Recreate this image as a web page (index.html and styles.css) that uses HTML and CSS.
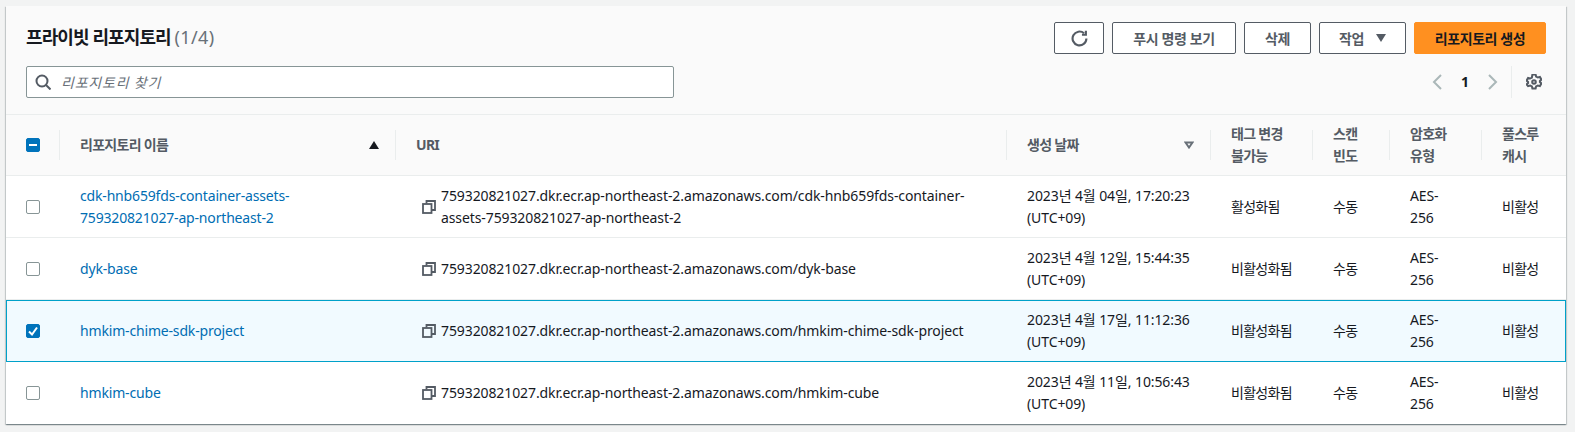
FILE: index.html
```html
<!DOCTYPE html>
<html lang="ko">
<head>
  <meta charset="UTF-8" />
  <title>프라이빗 리포지토리</title>
  <link rel="stylesheet" href="styles.css">
</head>
<body>
  <div class="card">
    <div class="card-header">
      <div class="title-row">
        <h2 class="title">프라이빗 리포지토리 <span class="count">(1/4)</span></h2>
        <div class="actions">
          <button class="btn btn-icon" aria-label="새로 고침">
            <svg width="17" height="17" viewBox="0 0 16 16" fill="none" stroke="#545b64" stroke-width="2"><path d="M14.5 8a6.5 6.5 0 1 1-2.2-4.9"/><path d="M14 0.8v3.7h-3.7" stroke-width="2"/></svg>
          </button>
          <button class="btn btn-push">푸시 명령 보기</button>
          <button class="btn btn-delete">삭제</button>
          <button class="btn btn-menu">작업 <span class="caret"></span></button>
          <button class="btn btn-primary">리포지토리 생성</button>
        </div>
      </div>
      <div class="filter-row">
        <div class="search">
          <svg width="16" height="16" viewBox="0 0 16 16" fill="none" stroke="#545b64" stroke-width="2"><circle cx="7" cy="7" r="5.5"/><path d="M11 11l4.5 4.5"/></svg>
          <input type="text" placeholder="리포지토리 찾기" />
        </div>
        <div class="pager">
          <svg class="pager-arrow" width="10" height="16" viewBox="0 0 10 16" fill="none" stroke="#aab7b8" stroke-width="2"><path d="M9 1L2 8l7 7"/></svg>
          <span class="page-num">1</span>
          <svg class="pager-arrow" width="10" height="16" viewBox="0 0 10 16" fill="none" stroke="#aab7b8" stroke-width="2"><path d="M1 1l7 7-7 7"/></svg>
          <span class="pager-sep"></span>
          <svg class="gear" width="16" height="16" viewBox="0 0 16 16" fill="none" stroke="#545b64" stroke-width="2"><path d="M6.4 1h3.2l.5 2 1.8 1 2-.6 1.5 2.7-1.5 1.4v1l1.5 1.4-1.5 2.7-2-.6-1.8 1-.5 2H6.400l-.5-2-1.800-1-2 .6L.6 10.900l1.500-1.400v-1L.6 7.100l1.500-2.700 2 .6 1.800-1z" transform="translate(0 -0.500)"/><circle cx="8" cy="8" r="1.800"/></svg>
        </div>
      </div>
    </div>

    <table class="repo-table">
      <colgroup>
        <col class="col-check"><col class="col-name"><col class="col-uri"><col class="col-date">
        <col class="col-tag"><col class="col-scan"><col class="col-enc"><col class="col-pull">
      </colgroup>
      <thead>
        <tr>
          <th class="check-cell"><span class="check check-minus"></span></th>
          <th><div class="th-sort">리포지토리 이름 <span class="sort-up"></span></div></th>
          <th>URI</th>
          <th><div class="th-sort">생성 날짜
            <svg width="10" height="8" viewBox="0 0 10 8" fill="none" stroke="#687078" stroke-width="2"><path d="M1.500 1.500h7L5 6.500z"/></svg>
          </div></th>
          <th>태그 변경<br>불가능</th>
          <th>스캔<br>빈도</th>
          <th>암호화<br>유형</th>
          <th>풀스루<br>캐시</th>
        </tr>
      </thead>
      <tbody>
        <tr>
          <td class="check-cell"><span class="check"></span></td>
          <td><a href="#">cdk-hnb659fds-container-assets-759320821027-ap-northeast-2</a></td>
          <td><div class="uri"><svg class="copy" width="14" height="14" viewBox="0 0 14 14" fill="none" stroke="#545b64" stroke-width="1.800"><rect x="1" y="4" width="8.500" height="9"/><path d="M4.500 3.500V1H13v9h-3"/></svg><span>759320821027.dkr.ecr.ap-northeast-2.amazonaws.com/cdk-hnb659fds-container-assets-759320821027-ap-northeast-2</span></div></td>
          <td class="date">2023년 4월 04일, 17:20:23 (UTC+09)</td>
          <td class="kr">활성화됨</td>
          <td class="kr">수동</td>
          <td>AES-256</td>
          <td class="kr">비활성</td>
        </tr>
        <tr>
          <td class="check-cell"><span class="check"></span></td>
          <td><a href="#">dyk-base</a></td>
          <td><div class="uri"><svg class="copy" width="14" height="14" viewBox="0 0 14 14" fill="none" stroke="#545b64" stroke-width="1.800"><rect x="1" y="4" width="8.500" height="9"/><path d="M4.500 3.500V1H13v9h-3"/></svg><span>759320821027.dkr.ecr.ap-northeast-2.amazonaws.com/dyk-base</span></div></td>
          <td class="date">2023년 4월 12일, 15:44:35 (UTC+09)</td>
          <td class="kr">비활성화됨</td>
          <td class="kr">수동</td>
          <td>AES-256</td>
          <td class="kr">비활성</td>
        </tr>
        <tr class="selected">
          <td class="check-cell"><span class="check check-on"><svg width="14" height="14" viewBox="0 0 14 14" fill="none" stroke="#fff" stroke-width="2"><path d="M3 7.500l3 3 5-7"/></svg></span></td>
          <td><a href="#">hmkim-chime-sdk-project</a></td>
          <td><div class="uri"><svg class="copy" width="14" height="14" viewBox="0 0 14 14" fill="none" stroke="#545b64" stroke-width="1.800"><rect x="1" y="4" width="8.500" height="9"/><path d="M4.500 3.500V1H13v9h-3"/></svg><span>759320821027.dkr.ecr.ap-northeast-2.amazonaws.com/hmkim-chime-sdk-project</span></div></td>
          <td class="date">2023년 4월 17일, 11:12:36 (UTC+09)</td>
          <td class="kr">비활성화됨</td>
          <td class="kr">수동</td>
          <td>AES-256</td>
          <td class="kr">비활성</td>
        </tr>
        <tr>
          <td class="check-cell"><span class="check"></span></td>
          <td><a href="#">hmkim-cube</a></td>
          <td><div class="uri"><svg class="copy" width="14" height="14" viewBox="0 0 14 14" fill="none" stroke="#545b64" stroke-width="1.800"><rect x="1" y="4" width="8.500" height="9"/><path d="M4.500 3.500V1H13v9h-3"/></svg><span>759320821027.dkr.ecr.ap-northeast-2.amazonaws.com/hmkim-cube</span></div></td>
          <td class="date">2023년 4월 11일, 10:56:43 (UTC+09)</td>
          <td class="kr">비활성화됨</td>
          <td class="kr">수동</td>
          <td>AES-256</td>
          <td class="kr">비활성</td>
        </tr>
      </tbody>
    </table>
  </div>
</body>
</html>
```

FILE: styles.css
```css
* {
  box-sizing: border-box;
}

body {
  margin: 0;
  padding: 6px 9px 8px 6px;
  background-color: #f2f3f3;
  color: #16191f;
  font-family: "Noto Sans", "Noto Sans CJK KR", sans-serif;
  font-size: 14px;
  line-height: 22px;
}

.card {
  background-color: #fff;
  box-shadow: 0 1px 1px 0 rgba(0,28,36,0.3), 1px 1px 1px 0 rgba(0,28,36,0.15), -1px 1px 1px 0 rgba(0,28,36,0.15);
}

.card-header {
  height: 109px;
  padding: 16px 20px 0;
  background-color: #fafafa;
  border-bottom: 1px solid #eaeded;
}

.title-row {
  display: flex;
  justify-content: space-between;
  align-items: flex-start;
}

.title {
  margin: 3px 0 0;
  font-size: 18px;
  line-height: 24px;
  font-weight: 700;
  letter-spacing: -0.9px;
}

.count {
  font-weight: 400;
  color: #687078;
  letter-spacing: 0.4px;
}

.actions {
  display: flex;
  gap: 8px;
}

.btn {
  display: flex;
  align-items: center;
  justify-content: center;
  height: 32px;
  padding: 0;
  background-color: #fff;
  border: 1px solid #545b64;
  border-radius: 2px;
  color: #545b64;
  font-family: inherit;
  font-size: 14px;
  font-weight: 700;
  letter-spacing: -0.4px;
}

.btn-icon { width: 50px; }
.btn-push { width: 124px; }
.btn-delete { width: 67px; }
.btn-menu { width: 87px; gap: 12px; }
.btn-primary {
  width: 132px;
  background-color: #ff9020;
  border-color: #ff9020;
  color: #16191f;
}

.caret {
  width: 0;
  height: 0;
  border-left: 5px solid transparent;
  border-right: 5px solid transparent;
  border-top: 8px solid #545b64;
}

.filter-row {
  display: flex;
  justify-content: space-between;
  margin-top: 12px;
}

.search {
  display: flex;
  align-items: center;
  gap: 10px;
  width: 648px;
  height: 32px;
  padding: 0 8px;
  background-color: #fff;
  border: 1px solid #879596;
  border-radius: 2px;
}

.search input {
  flex: 1;
  border: none;
  outline: none;
  padding: 0;
  background: none;
  font-family: inherit;
  font-size: 14px;
  font-style: italic;
  letter-spacing: 0.8px;
}

.search input::placeholder {
  color: #687078;
}

.pager {
  display: flex;
  align-items: center;
  height: 32px;
}

.page-num {
  width: 38px;
  text-align: center;
  font-weight: 700;
}

.pager-arrow {
  margin: 0 4px;
}

.pager-sep {
  width: 1px;
  height: 32px;
  margin: 0 14px 0 9px;
  background-color: #eaeded;
}

.gear {
  margin-right: 4px;
}

.repo-table {
  width: 100%;
  table-layout: fixed;
  border-collapse: separate;
  border-spacing: 0;
}

.col-check { width: 53px; }
.col-name { width: 336px; }
.col-uri { width: 611px; }
.col-date { width: 204px; }
.col-tag { width: 102px; }
.col-scan { width: 77px; }
.col-enc { width: 92px; }
.col-pull { width: 85px; }

th {
  height: 61px;
  padding: 0 8px 0 21px;
  background: #fafafa linear-gradient(#eaeded, #eaeded) left center / 1px 30px no-repeat;
  border-bottom: 1px solid #eaeded;
  color: #545b64;
  font-weight: 700;
  text-align: left;
  letter-spacing: -0.7px;
}

.th-sort {
  display: flex;
  align-items: center;
  justify-content: space-between;
  padding-right: 8px;
}

.sort-up {
  width: 0;
  height: 0;
  border-left: 5px solid transparent;
  border-right: 5px solid transparent;
  border-bottom: 8px solid #16191f;
}

td {
  height: 62px;
  padding: 4px 20px 4px 21px;
  border-bottom: 1px solid #eaeded;
  letter-spacing: -0.1px;
}

tbody tr:last-child td {
  border-bottom: none;
}

td a {
  color: #006db3;
  text-decoration: none;
  letter-spacing: -0.17px;
}

th.check-cell,
.check-cell {
  padding: 0 0 0 20px;
  background-image: none;
}

.check {
  display: block;
  width: 14px;
  height: 14px;
  background-color: #fff;
  border: 1px solid #879596;
  border-radius: 2px;
}

.check-on,
.check-minus {
  background-color: #0073bb;
  border-color: #0073bb;
}

.check-on svg {
  display: block;
  margin: -1px;
}

.check-minus {
  position: relative;
}

.check-minus::after {
  content: "";
  position: absolute;
  left: 2px;
  right: 2px;
  top: 5px;
  height: 2px;
  background-color: #fff;
}

.uri {
  display: flex;
  align-items: center;
  gap: 5px;
  margin-left: 6px;
}

.copy {
  flex: none;
}

.date {
  padding-right: 8px;
}

.kr {
  padding-right: 0;
  white-space: nowrap;
  letter-spacing: -0.7px;
}

.selected td {
  background-color: #f1faff;
  border-top: 1px solid #00a1c9;
  border-bottom: 1px solid #00a1c9;
}

.selected td:first-child {
  border-left: 1px solid #00a1c9;
  padding-left: 19px;
}

.selected td:last-child {
  border-right: 1px solid #00a1c9;
}
```
